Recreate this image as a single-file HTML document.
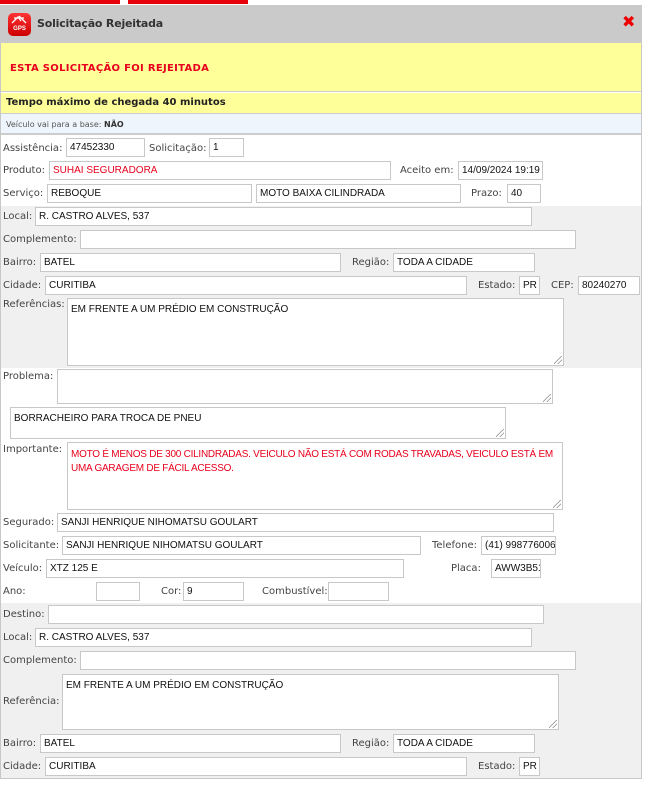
<!DOCTYPE html>
<html><head><meta charset="utf-8"><style>
*{box-sizing:border-box;margin:0;padding:0}
body{width:657px;height:797px;background:#fff;position:relative;overflow:hidden;font-family:"DejaVu Sans","Liberation Sans",sans-serif;font-size:10px;color:#444}
.a{position:absolute}
.l{position:absolute;font-size:10px;color:#444;white-space:nowrap;line-height:12px}
.i{position:absolute;background:#fff;border:1px solid #c8c8c8;height:19px;font-family:"Liberation Sans",sans-serif;font-size:10px;color:#111;padding:3px 0 0 3px;white-space:nowrap;overflow:hidden;line-height:12px}
.t{position:absolute;background:#fff;border:1px solid #c8c8c8;font-family:"Liberation Sans",sans-serif;font-size:10px;color:#111;padding:4px 3px;line-height:14px}
.r{color:#e8001c}
.g{position:absolute;left:1px;width:640px;background:#f0f0f0}
.grip{position:absolute;right:1px;bottom:1px;width:8px;height:8px;background:linear-gradient(135deg,transparent 45%,#888 46%,#888 52%,transparent 53%,transparent 70%,#888 71%,#888 77%,transparent 78%)}
</style></head><body>
<div class="a" style="left:0;top:0;width:120px;height:4px;background:#e8000b"></div>
<div class="a" style="left:128px;top:0;width:120px;height:4px;background:#e8000b"></div>
<div class="a" style="left:0;top:5px;width:642px;height:774px;border:1px solid #c8c8c8;border-top:none"></div>
<div class="a" style="left:0;top:5px;width:642px;height:38px;background:#cacaca"></div>
<div class="a" style="left:8px;top:13px;width:23px;height:23px;border-radius:5px;background:linear-gradient(#f33,#c00);color:#fff;font-size:6px;font-weight:bold;text-align:center;padding-top:13px;font-family:'Liberation Sans',sans-serif">GPS</div>
<svg class="a" style="left:11px;top:15px" width="17" height="10"><path d="M1 8 L7 2 L10 6 M8 1 L15 8 M3 3 L13 3" stroke="#fff" stroke-width="1.3" fill="none"/></svg>
<div class="l" style="left:37px;top:18px;font-size:11px;color:#333;font-weight:bold;letter-spacing:-0.2px">Solicitação Rejeitada</div>
<div class="a" style="left:622px;top:14px;color:#e00;font-size:16px;font-weight:bold;line-height:16px;font-family:'DejaVu Sans',sans-serif">✖</div>
<div class="a" style="left:1px;top:43px;width:640px;height:49px;background:#ffff99;border-bottom:1px solid #ccc"></div>
<div class="l r" style="left:10px;top:63px;font-weight:bold;letter-spacing:0.3px">ESTA SOLICITAÇÃO FOI REJEITADA</div>
<div class="a" style="left:1px;top:93px;width:640px;height:21px;background:#ffff99;border-bottom:1px solid #ccc"></div>
<div class="l" style="left:6px;top:97px;font-weight:bold;color:#222">Tempo máximo de chegada 40 minutos</div>
<div class="a" style="left:1px;top:114px;width:640px;height:21px;background:#eef5fc;border-bottom:2px solid #ccc"></div>
<div class="l" style="left:6px;top:119px;font-size:8px;color:#555">Veículo vai para a base: <b style="color:#333">NÃO</b></div>

<div class="g" style="top:206px;height:162px"></div>
<div class="g" style="top:603px;height:175px"></div>

<div class="l" style="left:3px;top:143px">Assistência:</div><div class="i" style="left:66px;top:138px;width:79px">47452330</div>
<div class="l" style="left:149px;top:143px">Solicitação:</div><div class="i" style="left:209px;top:138px;width:35px">1</div>
<div class="l" style="left:3px;top:165px">Produto:</div><div class="i r" style="left:49px;top:161px;width:342px;color:#e8001c">SUHAI SEGURADORA</div>
<div class="l" style="left:400px;top:165px">Aceito em:</div><div class="i" style="left:458px;top:161px;width:85px">14/09/2024 19:19</div>
<div class="l" style="left:3px;top:188px">Serviço:</div><div class="i" style="left:47px;top:184px;width:205px">REBOQUE</div>
<div class="i" style="left:256px;top:184px;width:205px">MOTO BAIXA CILINDRADA</div>
<div class="l" style="left:471px;top:188px">Prazo:</div><div class="i" style="left:507px;top:184px;width:34px">40</div>

<div class="l" style="left:3px;top:211px">Local:</div><div class="i" style="left:35px;top:207px;width:497px">R. CASTRO ALVES, 537</div>
<div class="l" style="left:3px;top:234px">Complemento:</div><div class="i" style="left:80px;top:230px;width:496px"></div>
<div class="l" style="left:3px;top:257px">Bairro:</div><div class="i" style="left:40px;top:253px;width:301px">BATEL</div>
<div class="l" style="left:352px;top:257px">Região:</div><div class="i" style="left:393px;top:253px;width:142px">TODA A CIDADE</div>
<div class="l" style="left:3px;top:280px">Cidade:</div><div class="i" style="left:45px;top:276px;width:422px">CURITIBA</div>
<div class="l" style="left:478px;top:280px">Estado:</div><div class="i" style="left:519px;top:276px;width:21px">PR</div>
<div class="l" style="left:551px;top:280px">CEP:</div><div class="i" style="left:578px;top:276px;width:62px">80240270</div>
<div class="l" style="left:3px;top:299px">Referências:</div><div class="t" style="left:67px;top:298px;width:497px;height:68px">EM FRENTE A UM PRÉDIO EM CONSTRUÇÃO<div class="grip"></div></div>

<div class="l" style="left:3px;top:371px">Problema:</div><div class="t" style="left:57px;top:369px;width:496px;height:35px"><div class="grip"></div></div>
<div class="t" style="left:10px;top:407px;width:496px;height:32px">BORRACHEIRO PARA TROCA DE PNEU<div class="grip"></div></div>
<div class="l" style="left:3px;top:444px">Importante:</div><div class="t r" style="left:67px;top:442px;width:496px;height:68px;color:#e8001c;padding-top:5px;letter-spacing:-0.25px">MOTO É MENOS DE 300 CILINDRADAS. VEICULO NÃO ESTÁ COM RODAS TRAVADAS, VEICULO ESTÁ EM UMA GARAGEM DE FÁCIL ACESSO.<div class="grip"></div></div>
<div class="l" style="left:3px;top:517px">Segurado:</div><div class="i" style="left:57px;top:513px;width:497px">SANJI HENRIQUE NIHOMATSU GOULART</div>
<div class="l" style="left:3px;top:540px">Solicitante:</div><div class="i" style="left:62px;top:536px;width:359px">SANJI HENRIQUE NIHOMATSU GOULART</div>
<div class="l" style="left:432px;top:540px">Telefone:</div><div class="i" style="left:481px;top:536px;width:75px">(41) 998776006</div>
<div class="l" style="left:3px;top:563px">Veículo:</div><div class="i" style="left:46px;top:559px;width:358px">XTZ 125 E</div>
<div class="l" style="left:451px;top:563px">Placa:</div><div class="i" style="left:491px;top:559px;width:50px">AWW3B51</div>
<div class="l" style="left:3px;top:586px">Ano:</div><div class="i" style="left:96px;top:582px;width:44px"></div>
<div class="l" style="left:161px;top:586px">Cor:</div><div class="i" style="left:183px;top:582px;width:61px">9</div>
<div class="l" style="left:262px;top:586px">Combustível:</div><div class="i" style="left:328px;top:582px;width:61px"></div>

<div class="l" style="left:3px;top:609px">Destino:</div><div class="i" style="left:48px;top:605px;width:496px"></div>
<div class="l" style="left:3px;top:632px">Local:</div><div class="i" style="left:35px;top:628px;width:497px">R. CASTRO ALVES, 537</div>
<div class="l" style="left:3px;top:655px">Complemento:</div><div class="i" style="left:80px;top:651px;width:496px"></div>
<div class="l" style="left:3px;top:696px">Referência:</div><div class="t" style="left:62px;top:674px;width:497px;height:56px">EM FRENTE A UM PRÉDIO EM CONSTRUÇÃO<div class="grip"></div></div>
<div class="l" style="left:3px;top:738px">Bairro:</div><div class="i" style="left:40px;top:734px;width:301px">BATEL</div>
<div class="l" style="left:352px;top:738px">Região:</div><div class="i" style="left:393px;top:734px;width:142px">TODA A CIDADE</div>
<div class="l" style="left:3px;top:761px">Cidade:</div><div class="i" style="left:45px;top:757px;width:422px">CURITIBA</div>
<div class="l" style="left:478px;top:761px">Estado:</div><div class="i" style="left:519px;top:757px;width:21px">PR</div>
</body></html>
